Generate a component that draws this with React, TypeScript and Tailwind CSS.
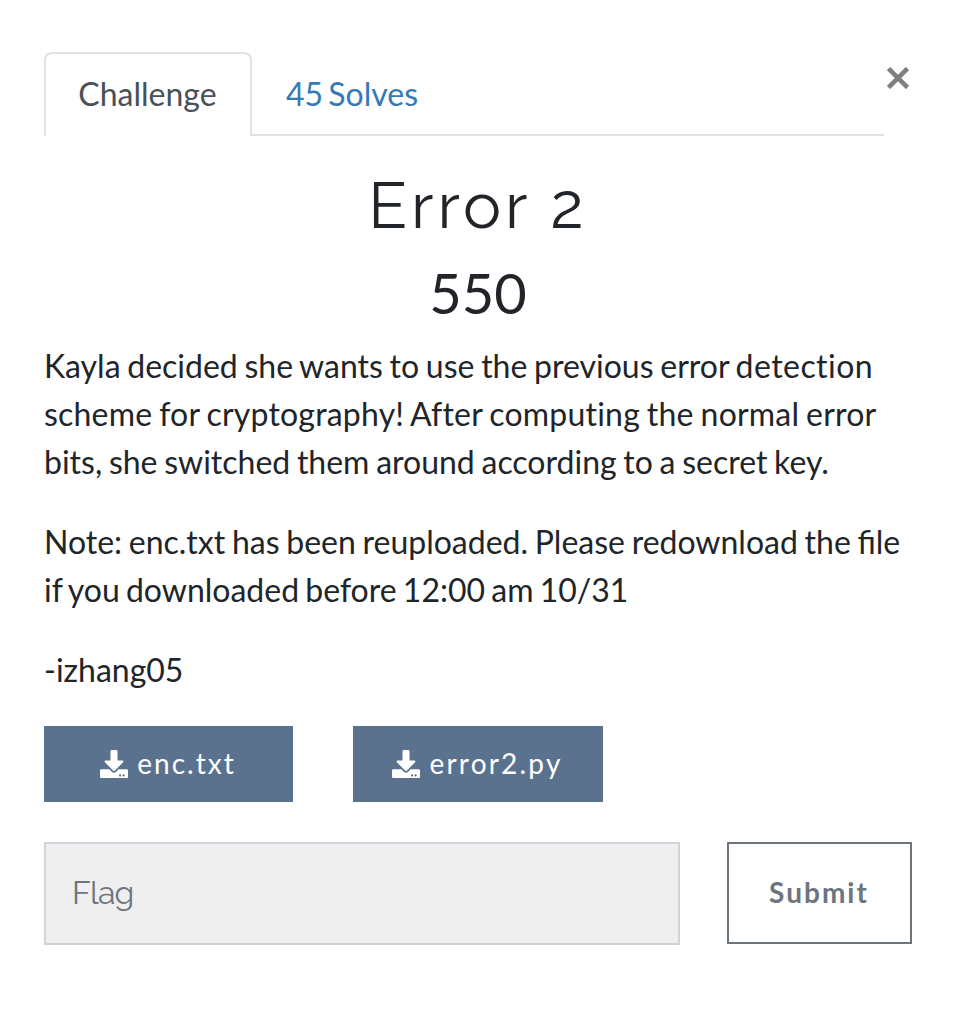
import { FaDownload } from "react-icons/fa";

const files = [
  { name: "enc.txt", style: "w-[249px] gap-[9px] pr-[1px] tracking-[2px]" },
  { name: "error2.py", style: "w-[250px] gap-[9px] pr-[1px] tracking-[2.2px]" },
];

export default function App() {
  return (
    <main className="h-[1024px] w-[970px] overflow-hidden bg-white px-11 pt-[52px] font-['Lato',sans-serif] text-[32px] leading-[48px] text-[#212529]">
      <header className="flex items-start">
        <nav className="flex h-[84px] w-[840px] border-b-2 border-[#dee2e6]">
          <button className="h-[84px] w-[208px] shrink-0 rounded-t-lg border-2 border-b-0 border-[#dee2e6] bg-white pr-[1px] pb-[2px] text-[#495057]">Challenge</button>
          <button className="h-[84px] px-[34px] text-[#337ab7] [word-spacing:-3px]">45 Solves</button>
        </nav>
        <button aria-label="Close" className="mt-[15px] ml-[3px]">
          <svg width="22" height="22" viewBox="0 0 22 22" fill="none" stroke="#7f7f7f" strokeWidth="4.6"><path d="M1.5 1.5L20.5 20.5M20.5 1.5L1.5 20.5" /></svg>
        </button>
      </header>
      <h1 className="mt-8 h-[76px] pr-[14px] text-center font-['Raleway','Lato',sans-serif] text-[64px] leading-[76px] font-normal tracking-[4px]">Error 2</h1>
      <h2 className="mt-[15px] h-[67px] pr-[14px] text-center text-[56px] leading-[67px]">550</h2>
      <section className="mt-4 w-[880px] [word-spacing:-1.5px]">
        <p className="[font-variant-ligatures:none]">
          Kayla decided she wants to use the previous error <span className="tracking-[0.45px]">detection</span><br />
          <span className="tracking-[0.2px]">scheme for cryptography! After computing the normal error</span><br />
          bits, she switched them around according to a secret key.
        </p>
        <p className="mt-8">Note: enc.txt has been reuploaded. Please redownload the file<br /><span className="[word-spacing:-2px]">if you downloaded before 12:00 am 10/31</span></p>
        <p className="mt-8">-izhang05</p>
      </section>
      <div className="mt-8 flex gap-[60px]">
        {files.map((file) => (
          <button key={file.name} className={`flex h-[76px] items-center justify-center bg-[#5b728f] text-[28px] text-white ${file.style}`}>
            <FaDownload size={28} />
            <span className="pb-[2px]">{file.name}</span>
          </button>
        ))}
      </div>
      <form className="mt-10 flex gap-[47px]">
        <input placeholder="Flag" className="h-[103px] w-[636px] border-2 border-[#ced4da] bg-[#efefef] px-[26px] pb-[2px] font-['Raleway','Lato',sans-serif] font-normal tracking-[-0.8px] placeholder:text-[#6c757d]" />
        <button type="button" className="h-[102px] w-[185px] border-2 border-[#6c757d] pr-[1px] pb-[3px] text-[28px] font-bold tracking-[2px] text-[#6c757d]">Submit</button>
      </form>
    </main>
  );
}
